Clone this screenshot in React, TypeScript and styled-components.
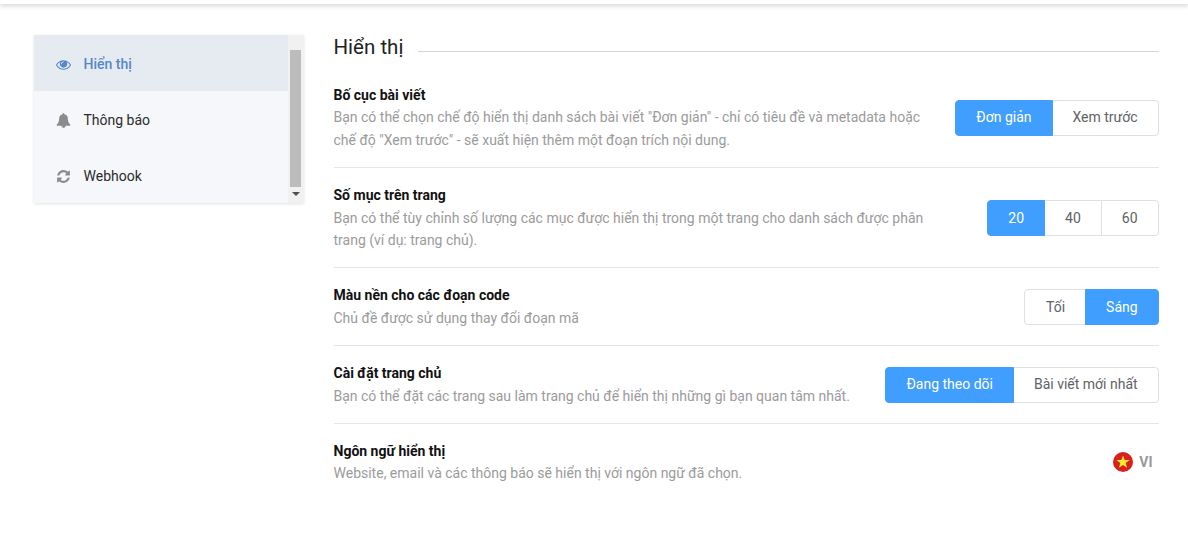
import styled, { createGlobalStyle } from 'styled-components';
import type { ReactNode } from 'react';

const GlobalStyle = createGlobalStyle`
  * {
    box-sizing: border-box;
  }
  body {
    margin: 0;
    background: #fff;
    font-family: Roboto, "Liberation Sans", sans-serif;
    font-size: 14px;
    color: #1b1b1b;
  }
`;

const TopShadow = styled.div`
  height: 4px;
  background: #fff;
  box-shadow: 0 2px 4px rgba(0, 0, 0, 0.18);
`;

const Page = styled.div`
  display: flex;
  align-items: flex-start;
  gap: 30px;
  padding: 31px 29px 0 33.5px;
`;

const Sidebar = styled.aside`
  display: flex;
  flex: 0 0 270px;
  height: 168px;
  background: #f5f7fa;
  box-shadow: 0 1px 3px rgba(0, 0, 0, 0.12);
`;

const Menu = styled.nav`
  flex: 1;
`;

const MenuItem = styled.div<{ $active?: boolean }>`
  display: flex;
  align-items: center;
  gap: 13px;
  height: 56px;
  padding: 2px 0 0 22px;
  background: ${({ $active }) => ($active ? '#e6ebf2' : 'transparent')};
  color: ${({ $active }) => ($active ? '#5488c7' : '#2b2b2b')};
  font-weight: ${({ $active }) => ($active ? 500 : 400)};

  svg {
    width: 15px;
    height: 15px;
    color: ${({ $active }) => ($active ? '#5488c7' : '#8b8b8b')};
  }
`;

const Scrollbar = styled.div`
  display: flex;
  flex: 0 0 16px;
  flex-direction: column;
  align-items: center;
  background: #f1f1f1;
`;

const ScrollArrow = styled.div<{ $down?: boolean }>`
  flex: 0 0 15px;
  width: 0;
  height: 0;
  margin-top: ${({ $down }) => ($down ? '5px' : '6px')};
  border-left: 4px solid transparent;
  border-right: 4px solid transparent;
  border-bottom: ${({ $down }) => ($down ? '0' : '4px solid #a3a3a3')};
  border-top: ${({ $down }) => ($down ? '4px solid #505050' : '0')};
`;

const ScrollThumb = styled.div`
  flex: 0 0 137px;
  width: 11px;
  margin-top: -6px;
  background: #bcbcbc;
`;

const Content = styled.main`
  flex: 1;
  min-width: 0;
`;

const Heading = styled.div`
  display: flex;
  align-items: center;
  gap: 15px;
  height: 24px;
  margin-bottom: 9px;
  font-size: 20.5px;
  font-weight: 400;
  color: #222;

  &::after {
    content: '';
    flex: 1;
    height: 1px;
    margin-top: 8px;
    background: #d4d4d8;
  }
`;

const Row = styled.section`
  display: flex;
  align-items: center;
  justify-content: space-between;
  padding: 16px 0;
  line-height: 1.6;
  border-bottom: 1px solid #e4e4ea;

  &:last-child {
    border-bottom: none;
  }
`;

const RowText = styled.div`
  width: 590px;
`;

const RowTitle = styled.div`
  font-weight: 700;
  color: #111;
`;

const RowDesc = styled.div`
  color: #9b9b9b;
`;

const Group = styled.div`
  display: flex;
  flex: none;
`;

const GroupButton = styled.button<{ $active?: boolean }>`
  position: relative;
  z-index: ${({ $active }) => ($active ? 1 : 0)};
  height: 36px;
  padding: 0 20px;
  margin: 0 0 0 -1px;
  font: inherit;
  color: ${({ $active }) => ($active ? '#fff' : '#606266')};
  background: ${({ $active }) => ($active ? '#409eff' : '#fff')};
  border: 1px solid ${({ $active }) => ($active ? '#409eff' : '#dcdfe6')};
  cursor: pointer;

  &:first-child {
    margin-left: 0;
    padding-left: 20.6px;
    border-radius: 4px 0 0 4px;
  }
  &:last-child {
    padding-right: 20.4px;
    border-radius: 0 4px 4px 0;
  }
`;

const Language = styled.div`
  display: flex;
  align-items: center;
  gap: 6.5px;
  padding-right: 6.5px;
  font-weight: 700;
  color: #999;
`;

type ToggleGroupProps = {
  options: string[];
  active: string;
};

const ToggleGroup = ({ options, active }: ToggleGroupProps) => (
  <Group>
    {options.map((option) => (
      <GroupButton key={option} type="button" $active={option === active}>
        {option}
      </GroupButton>
    ))}
  </Group>
);

type SettingRowProps = {
  title: string;
  children: ReactNode;
  description: ReactNode;
};

const SettingRow = ({ title, description, children }: SettingRowProps) => (
  <Row>
    <RowText>
      <RowTitle>{title}</RowTitle>
      <RowDesc>{description}</RowDesc>
    </RowText>
    {children}
  </Row>
);

// font-awesome 4 glyphs, the react-icons fa set only has the v5 drawings
const EyeIcon = () => (
  <svg viewBox="0 0 1792 1792" fill="currentColor" aria-hidden="true">
    <path d="M1664 960q-152-236-381-353 61 104 61 225 0 185-131.500 316.500T896 1280t-316.500-131.500T448 832q0-121 61-225-229 117-381 353 133 205 333.500 326.500T896 1408t434.500-121.500T1664 960zM944 576q0-20-14-34t-34-14q-125 0-214.500 89.500T592 832q0 20 14 34t34 14 34-14 14-34q0-86 61-147t147-61q20 0 34-14t14-34zm848 384q0 34-20 69-140 230-376.500 368.500T896 1536t-499.500-139T20 1029q-20-35-20-69t20-69q140-229 376.500-368T896 384t499.500 139T1772 891q20 35 20 69z" />
  </svg>
);

const BellIcon = () => (
  <svg viewBox="0 0 1792 1792" fill="currentColor" aria-hidden="true">
    <path d="M912 1696q0-16-16-16-59 0-101.500-42.500T752 1536q0-16-16-16t-16 16q0 73 51.500 124.500T896 1712q16 0 16-16zm816-288q0 52-38 90t-90 38h-448q0 106-75 181t-181 75-181-75-75-181H192q-52 0-90-38t-38-90q50-42 91-88t85-119.500 74.500-158.500 50-206T384 576q0-152 117-282.500T808 135q-8-19-8-39 0-40 28-68t68-28 68 28 28 68q0 20-8 39 190 28 307 158.500T1408 576q0 139 19.500 260t50 206 74.500 158.500 85 119.500 91 88z" />
  </svg>
);

const RefreshIcon = () => (
  <svg viewBox="-128 -128 1792 1792" fill="currentColor" aria-hidden="true">
    <path d="M1511 928q0 5-1 7-64 268-268 434.500T764 1536q-146 0-282.500-55T238 1324l-129 129q-19 19-45 19t-45-19-19-45V960q0-26 19-45t45-19h448q26 0 45 19t19 45-19 45l-137 137q71 66 161 102t187 36q134 0 250-65t186-179q11-17 53-117 8-23 30-23h192q13 0 22.500 9.500t9.500 22.500zm25-800v448q0 26-19 45t-45 19h-448q-26 0-45-19t-19-45 19-45l138-138Q969 256 768 256q-134 0-250 65T332 500q-11 17-53 117-8 23-30 23H50q-13 0-22.500-9.500T18 608v-7q65-268 270-434.500T768 0q146 0 284 55.500T1297 212l130-129q19-19 45-19t45 19 19 45z" />
  </svg>
);

const VietnamFlag = () => (
  <svg width="20" height="20" viewBox="0 0 20 20" aria-hidden="true">
    <circle cx="10" cy="10" r="10" fill="#d8201f" />
    <polygon
      points="10,3.4 11.7,8 16.6,8.1 12.7,11 14.1,15.7 10,12.9 5.9,15.7 7.3,11 3.4,8.1 8.3,8"
      fill="#ffeb2a"
    />
  </svg>
);

const App = () => (
  <>
    <GlobalStyle />
    <TopShadow />
    <Page>
      <Sidebar>
        <Menu>
          <MenuItem $active>
            <EyeIcon />
            Hiển thị
          </MenuItem>
          <MenuItem>
            <BellIcon />
            Thông báo
          </MenuItem>
          <MenuItem>
            <RefreshIcon />
            Webhook
          </MenuItem>
        </Menu>
        <Scrollbar>
          <ScrollArrow />
          <ScrollThumb />
          <ScrollArrow $down />
        </Scrollbar>
      </Sidebar>
      <Content>
        <Heading>Hiển thị</Heading>
        <SettingRow
          title="Bố cục bài viết"
          description={
            <>
              Bạn có thể chọn chế độ hiển thị danh sách bài viết "Đơn giản" - chỉ có tiêu đề và metadata hoặc
              <br />
              chế độ "Xem trước" - sẽ xuất hiện thêm một đoạn trích nội dung.
            </>
          }
        >
          <ToggleGroup options={['Đơn giản', 'Xem trước']} active="Đơn giản" />
        </SettingRow>
        <SettingRow
          title="Số mục trên trang"
          description={
            <>
              Bạn có thể tùy chỉnh số lượng các mục được hiển thị trong một trang cho danh sách được phân
              <br />
              trang (ví dụ: trang chủ).
            </>
          }
        >
          <ToggleGroup options={['20', '40', '60']} active="20" />
        </SettingRow>
        <SettingRow title="Màu nền cho các đoạn code" description="Chủ đề được sử dụng thay đổi đoạn mã">
          <ToggleGroup options={['Tối', 'Sáng']} active="Sáng" />
        </SettingRow>
        <SettingRow
          title="Cài đặt trang chủ"
          description="Bạn có thể đặt các trang sau làm trang chủ để hiển thị những gì bạn quan tâm nhất."
        >
          <ToggleGroup options={['Đang theo dõi', 'Bài viết mới nhất']} active="Đang theo dõi" />
        </SettingRow>
        <SettingRow
          title="Ngôn ngữ hiển thị"
          description="Website, email và các thông báo sẽ hiển thị với ngôn ngữ đã chọn."
        >
          <Language>
            <VietnamFlag />
            VI
          </Language>
        </SettingRow>
      </Content>
    </Page>
  </>
);

export default App;
